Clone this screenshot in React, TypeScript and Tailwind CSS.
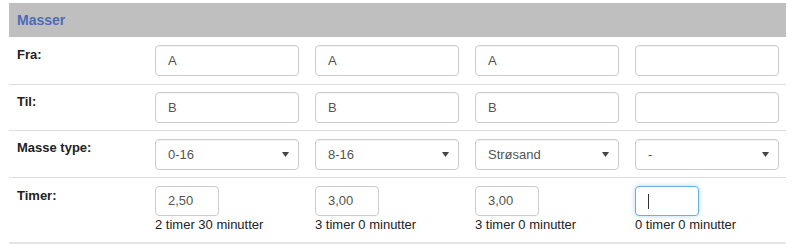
type Col = { fra: string; til: string; type: string; timer: string; note: string; focused?: boolean };

const COLS: Col[] = [
  { fra: "A", til: "B", type: "0-16", timer: "2,50", note: "2 timer 30 minutter" },
  { fra: "A", til: "B", type: "8-16", timer: "3,00", note: "3 timer 0 minutter" },
  { fra: "A", til: "B", type: "Strøsand", timer: "3,00", note: "3 timer 0 minutter" },
  { fra: "", til: "", type: "-", timer: "", note: "0 timer 0 minutter", focused: true },
];

const inputCls =
  "h-[31px] rounded border border-[#cccccc] bg-white px-3 text-[13px] text-[#555555] flex items-center shadow-[inset_0_1px_1px_rgba(0,0,0,0.04)]";

function Caret() {
  return <span className="inline-block h-[15px] w-px bg-[#333]" />;
}

export default function App() {
  const labelCls = "w-[138px] shrink-0 px-2 text-[13px] leading-[17px] font-bold text-[#222]";
  const rowCls = "flex border-t border-[#dddddd]";
  const cellCls = "w-[160px] shrink-0 px-2";

  return (
    <div className="h-[249px] w-[800px] bg-white pt-[3px] pl-[9px] font-['Liberation_Sans',Arial,sans-serif]">
      <div className="w-[777px]">
        <div className="flex h-[34px] items-center bg-[#bfbfbf] px-2 text-[14px] font-bold text-[#4b6cb7]">
          Masser
        </div>

        {/* Fra */}
        <div className="flex">
          <div className={labelCls + " pt-[9px]"}>Fra:</div>
          {COLS.map((c, i) => (
            <div key={i} className={cellCls + " py-2"}>
              <div className={inputCls}>{c.fra}</div>
            </div>
          ))}
        </div>

        {/* Til */}
        <div className={rowCls}>
          <div className={labelCls + " pt-[8px]"}>Til:</div>
          {COLS.map((c, i) => (
            <div key={i} className={cellCls + " py-[7px]"}>
              <div className={inputCls}>{c.til}</div>
            </div>
          ))}
        </div>

        {/* Masse type */}
        <div className={rowCls}>
          <div className={labelCls + " pt-[8px]"}>Masse type:</div>
          {COLS.map((c, i) => (
            <div key={i} className={cellCls + " pt-2 pb-[7px]"}>
              <div className={inputCls + " h-[30px] justify-between pr-[9px] pl-[12px]"}>
                <span>{c.type}</span>
                <svg width="7" height="5" viewBox="0 0 7 5" className="text-[#444]">
                  <path d="M0 0h7L3.5 5z" fill="currentColor" />
                </svg>
              </div>
            </div>
          ))}
        </div>

        {/* Timer */}
        <div className={rowCls + " border-b-2 border-b-[#e5e5e5]"}>
          <div className={labelCls + " pt-[9px]"}>Timer:</div>
          {COLS.map((c, i) => (
            <div key={i} className={cellCls + " pt-2 pb-[9px]"}>
              <div
                className={
                  "w-[64px] h-[30px] rounded border bg-white px-3 text-[13px] text-[#555555] flex items-center " +
                  (c.focused
                    ? "border-[#66afe9] shadow-[0_0_5px_rgba(102,175,233,0.5)]"
                    : "border-[#cccccc]")
                }
              >
                {c.focused ? <Caret /> : c.timer}
              </div>
              <div className="text-[13px] leading-[17px] text-[#222]">{c.note}</div>
            </div>
          ))}
        </div>
      </div>
    </div>
  );
}
